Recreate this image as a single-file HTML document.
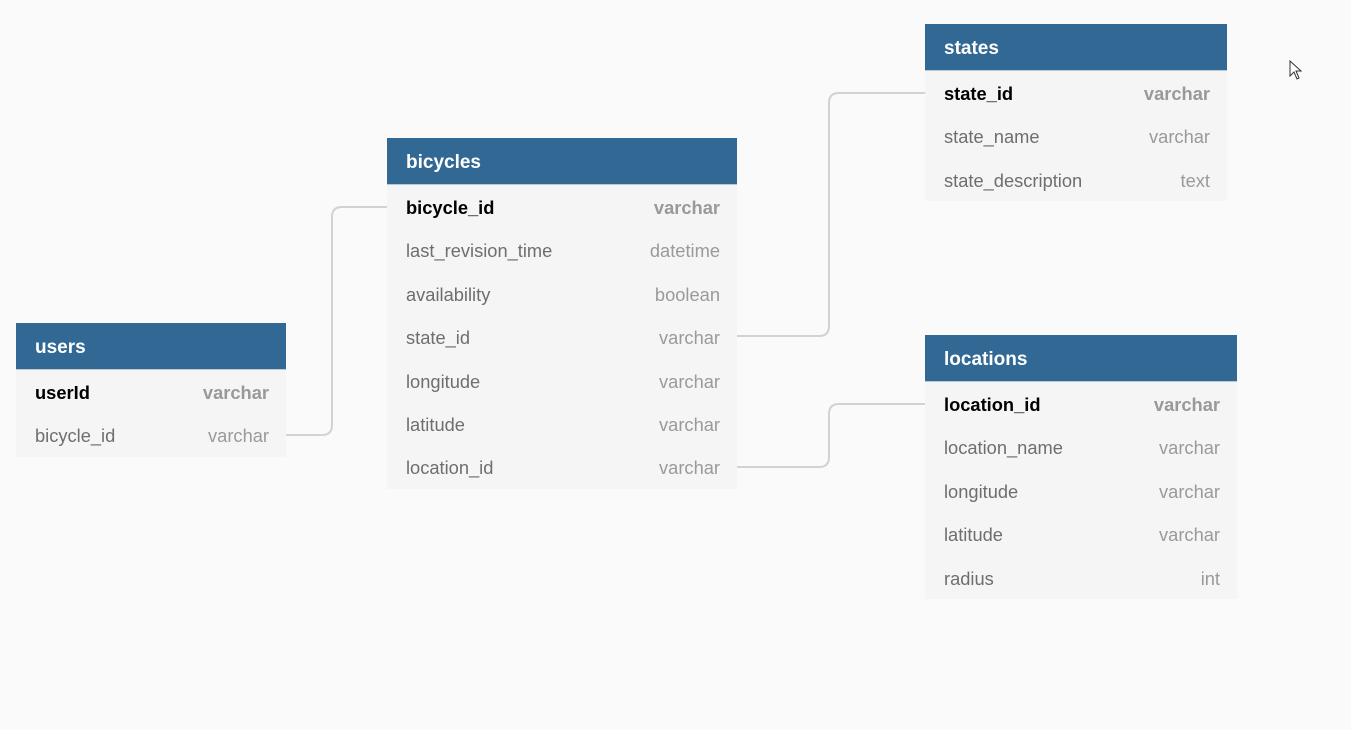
<!DOCTYPE html>
<html><head><style>
body{margin:0;width:1351px;height:730px;background:#fafafa;position:relative;overflow:hidden;font-family:"Liberation Sans","DejaVu Sans",sans-serif}
.t{position:absolute;background:#f5f5f5}
.h{height:47px;background:#316894;color:#fff;font-weight:bold;font-size:19px;line-height:49px;padding-left:19px;border-bottom:1px solid #b9c9d6;box-sizing:border-box}
.r{height:43.4px;line-height:45px;font-size:18.3px;color:#6e6e6e;padding:0 17px 0 19px;display:flex;justify-content:space-between}
.r span:last-child{color:#9a9a9a}
.r.k{color:#000;font-weight:bold}
.r.k span:last-child{color:#999;font-weight:bold}
svg{position:absolute;left:0;top:0}
</style></head><body>
<svg width="1351" height="730"><g fill="none" stroke="#d2d2d2" stroke-width="2">
<path d="M286 435 H322 Q332 435 332 425 V217 Q332 207 342 207 H387"/>
<path d="M737 336 H819 Q829 336 829 326 V103 Q829 93 839 93 H925"/>
<path d="M737 467 H819 Q829 467 829 457 V414 Q829 404 839 404 H925"/>
</g>
<path d="M1290 61 V76 L1294 72 L1297 79 L1299 78 L1296 71 L1301 71 Z" fill="#fff" stroke="#333" stroke-width="1"/>
</svg>
<div class="t" style="left:16px;top:323px;width:270px">
<div class="h">users</div>
<div class="r k"><span>userId</span><span>varchar</span></div>
<div class="r"><span>bicycle_id</span><span>varchar</span></div>
</div>
<div class="t" style="left:387px;top:138px;width:350px">
<div class="h">bicycles</div>
<div class="r k"><span>bicycle_id</span><span>varchar</span></div>
<div class="r"><span>last_revision_time</span><span>datetime</span></div>
<div class="r"><span>availability</span><span>boolean</span></div>
<div class="r"><span>state_id</span><span>varchar</span></div>
<div class="r"><span>longitude</span><span>varchar</span></div>
<div class="r"><span>latitude</span><span>varchar</span></div>
<div class="r"><span>location_id</span><span>varchar</span></div>
</div>
<div class="t" style="left:925px;top:24px;width:302px">
<div class="h">states</div>
<div class="r k"><span>state_id</span><span>varchar</span></div>
<div class="r"><span>state_name</span><span>varchar</span></div>
<div class="r"><span>state_description</span><span>text</span></div>
</div>
<div class="t" style="left:925px;top:335px;width:312px">
<div class="h">locations</div>
<div class="r k"><span>location_id</span><span>varchar</span></div>
<div class="r"><span>location_name</span><span>varchar</span></div>
<div class="r"><span>longitude</span><span>varchar</span></div>
<div class="r"><span>latitude</span><span>varchar</span></div>
<div class="r"><span>radius</span><span>int</span></div>
</div>
</body></html>
